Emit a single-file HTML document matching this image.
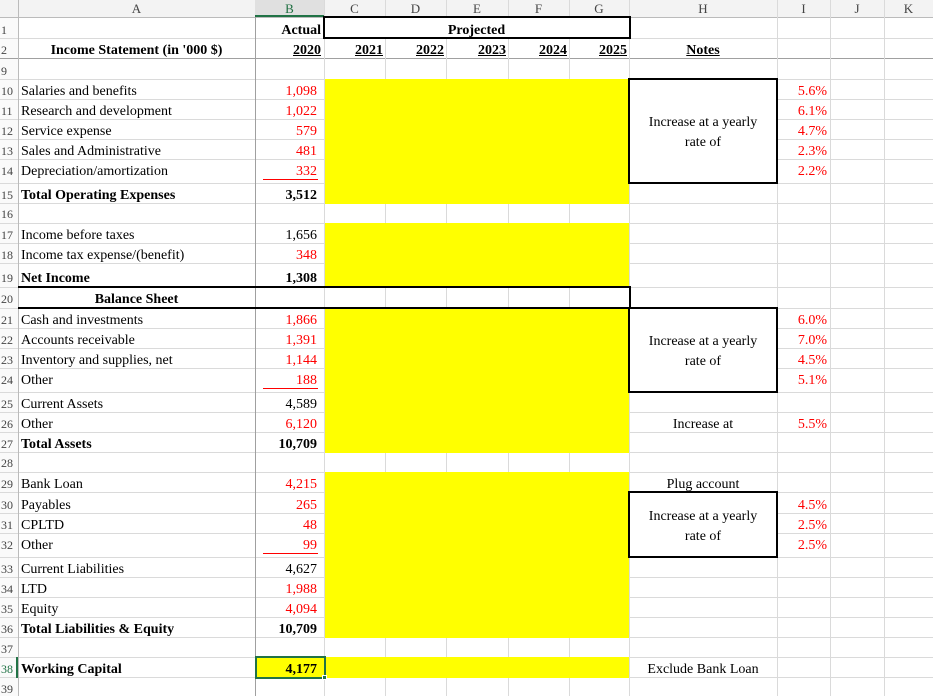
<!DOCTYPE html>
<html><head><meta charset="utf-8"><style>
body{margin:0;width:933px;height:696px;overflow:hidden;background:#fff;position:relative;font-family:"Liberation Serif",serif;font-size:14px;color:#000}
div{position:absolute;box-sizing:border-box}
.h{height:1px;left:0;width:933px;background:#dadada}
.v{width:1px;top:0;height:696px;background:#dadada}
.y{background:#ffff00}
.t{white-space:nowrap;height:17px;line-height:17px;margin-top:2px}
.r{text-align:right}
.c{text-align:center}
.b{font-weight:bold}
.red{color:#f00}
.u{text-decoration:underline}
.rn{left:0;width:18px;font-size:12px;color:#444;text-align:left;padding-left:1px;white-space:nowrap;font-family:"Liberation Serif",serif}
.cl{top:0;height:17px;line-height:17px;text-align:center;font-size:13px;color:#444}
.bx{border:2px solid #000;background:#fff}
.ul{height:1px;background:#f00;left:263px;width:55px}
</style></head><body>
<div style="left:0;top:0;width:933px;height:17px;background:#f3f3f3"></div>
<div style="left:0;top:17px;width:18px;height:679px;background:#fafafa"></div>
<div class="h" style="top:17px;background:#bbb"></div>
<div class="h" style="top:38px"></div><div class="h" style="top:58px;background:#a0a0a0"></div>
<div class="h" style="top:79px"></div><div class="h" style="top:99px"></div><div class="h" style="top:119px"></div>
<div class="h" style="top:139px"></div><div class="h" style="top:159px"></div><div class="h" style="top:183px"></div>
<div class="h" style="top:203px"></div><div class="h" style="top:223px"></div><div class="h" style="top:243px"></div>
<div class="h" style="top:263px"></div><div class="h" style="top:287px"></div><div class="h" style="top:308px"></div>
<div class="h" style="top:328px"></div><div class="h" style="top:348px"></div><div class="h" style="top:368px"></div>
<div class="h" style="top:392px"></div><div class="h" style="top:412px"></div><div class="h" style="top:432px"></div>
<div class="h" style="top:452px"></div><div class="h" style="top:472px"></div><div class="h" style="top:492px"></div>
<div class="h" style="top:513px"></div><div class="h" style="top:533px"></div><div class="h" style="top:557px"></div>
<div class="h" style="top:577px"></div><div class="h" style="top:597px"></div><div class="h" style="top:617px"></div>
<div class="h" style="top:637px"></div><div class="h" style="top:657px"></div><div class="h" style="top:677px"></div>
<div class="v" style="left:18px;background:#bbb"></div>
<div class="v" style="left:255px;background:#a0a0a0"></div>
<div class="v" style="left:324px"></div><div class="v" style="left:385px"></div><div class="v" style="left:446px"></div>
<div class="v" style="left:508px"></div><div class="v" style="left:569px"></div><div class="v" style="left:629px"></div>
<div class="v" style="left:777px"></div><div class="v" style="left:830px"></div><div class="v" style="left:884px"></div>
<div class="cl" style="left:18px;width:237px">A</div>
<div class="cl" style="left:255px;width:69px;background:#e0e0e0;color:#1e6e40">B</div>
<div style="left:255px;top:15px;width:69px;height:2px;background:#217346"></div>
<div class="cl" style="left:324px;width:61px">C</div>
<div class="cl" style="left:385px;width:61px">D</div>
<div class="cl" style="left:446px;width:62px">E</div>
<div class="cl" style="left:508px;width:61px">F</div>
<div class="cl" style="left:569px;width:60px">G</div>
<div class="cl" style="left:629px;width:148px">H</div>
<div class="cl" style="left:777px;width:53px">I</div>
<div class="cl" style="left:830px;width:54px">J</div>
<div class="cl" style="left:884px;width:49px">K</div>
<div class="y" style="left:325px;top:79px;width:304px;height:125px"></div>
<div class="y" style="left:325px;top:223px;width:304px;height:64px"></div>
<div class="y" style="left:325px;top:308px;width:304px;height:145px"></div>
<div class="y" style="left:325px;top:472px;width:304px;height:166px"></div>
<div class="y" style="left:325px;top:657px;width:304px;height:21px"></div>
<div class="y" style="left:256px;top:657px;width:68px;height:21px"></div>
<div style="left:255px;top:656px;width:71px;height:23px;border:2px solid #217346"></div>
<div style="left:322px;top:675px;width:5px;height:5px;background:#217346;border:1px solid #fff"></div>
<div class="bx" style="left:323px;top:16px;width:308px;height:23px"></div>
<div style="left:18px;top:286px;width:613px;height:23px;border:2px solid #000;border-left:none"></div>
<div class="bx" style="left:628px;top:78px;width:150px;height:106px"></div>
<div class="bx" style="left:628px;top:307px;width:150px;height:86px"></div>
<div class="bx" style="left:628px;top:491px;width:150px;height:67px"></div>
<div class="ul" style="top:179px"></div>
<div class="ul" style="top:388px"></div>
<div class="ul" style="top:553px"></div>
<div class="rn t" style="top:20px">1</div><div class="rn t" style="top:40px">2</div>
<div class="rn t" style="top:61px">9</div><div class="rn t" style="top:81px">10</div>
<div class="rn t" style="top:101px">11</div><div class="rn t" style="top:121px">12</div>
<div class="rn t" style="top:141px">13</div><div class="rn t" style="top:161px">14</div>
<div class="rn t" style="top:185px">15</div><div class="rn t" style="top:204px">16</div>
<div class="rn t" style="top:225px">17</div><div class="rn t" style="top:245px">18</div>
<div class="rn t" style="top:268px">19</div><div class="rn t" style="top:289px">20</div>
<div class="rn t" style="top:310px">21</div><div class="rn t" style="top:330px">22</div>
<div class="rn t" style="top:350px">23</div><div class="rn t" style="top:370px">24</div>
<div class="rn t" style="top:394px">25</div><div class="rn t" style="top:414px">26</div>
<div class="rn t" style="top:434px">27</div><div class="rn t" style="top:453px">28</div>
<div class="rn t" style="top:474px">29</div><div class="rn t" style="top:495px">30</div>
<div class="rn t" style="top:515px">31</div><div class="rn t" style="top:535px">32</div>
<div class="rn t" style="top:559px">33</div><div class="rn t" style="top:579px">34</div>
<div class="rn t" style="top:599px">35</div><div class="rn t" style="top:619px">36</div>
<div class="rn t" style="top:639px">37</div><div class="rn t" style="top:659px;color:#217346">38</div>
<div class="rn t" style="top:679px">39</div>
<div style="left:16px;top:657px;width:2px;height:21px;background:#217346"></div>
<div class="t b c" style="left:18px;width:237px;top:40px">Income Statement (in '000 $)</div>
<div class="t" style="left:21px;top:81px">Salaries and benefits</div>
<div class="t" style="left:21px;top:101px">Research and development</div>
<div class="t" style="left:21px;top:121px">Service expense</div>
<div class="t" style="left:21px;top:141px">Sales and Administrative</div>
<div class="t" style="left:21px;top:161px">Depreciation/amortization</div>
<div class="t b" style="left:21px;top:185px">Total Operating Expenses</div>
<div class="t" style="left:21px;top:225px">Income before taxes</div>
<div class="t" style="left:21px;top:245px">Income tax expense/(benefit)</div>
<div class="t b" style="left:21px;top:268px">Net Income</div>
<div class="t b c" style="left:18px;width:237px;top:289px">Balance Sheet</div>
<div class="t" style="left:21px;top:310px">Cash and investments</div>
<div class="t" style="left:21px;top:330px">Accounts receivable</div>
<div class="t" style="left:21px;top:350px">Inventory and supplies, net</div>
<div class="t" style="left:21px;top:370px">Other</div>
<div class="t" style="left:21px;top:394px">Current Assets</div>
<div class="t" style="left:21px;top:414px">Other</div>
<div class="t b" style="left:21px;top:434px">Total Assets</div>
<div class="t" style="left:21px;top:474px">Bank Loan</div>
<div class="t" style="left:21px;top:495px">Payables</div>
<div class="t" style="left:21px;top:515px">CPLTD</div>
<div class="t" style="left:21px;top:535px">Other</div>
<div class="t" style="left:21px;top:559px">Current Liabilities</div>
<div class="t" style="left:21px;top:579px">LTD</div>
<div class="t" style="left:21px;top:599px">Equity</div>
<div class="t b" style="left:21px;top:619px">Total Liabilities &amp; Equity</div>
<div class="t b" style="left:21px;top:659px">Working Capital</div>
<div class="t b r" style="left:255px;width:66px;top:20px">Actual</div>
<div class="t b r u" style="left:255px;width:66px;top:40px">2020</div>
<div class="t r red" style="left:255px;width:62px;top:81px">1,098</div>
<div class="t r red" style="left:255px;width:62px;top:101px">1,022</div>
<div class="t r red" style="left:255px;width:62px;top:121px">579</div>
<div class="t r red" style="left:255px;width:62px;top:141px">481</div>
<div class="t r red" style="left:255px;width:62px;top:161px">332</div>
<div class="t r b" style="left:255px;width:62px;top:185px">3,512</div>
<div class="t r" style="left:255px;width:62px;top:225px">1,656</div>
<div class="t r red" style="left:255px;width:62px;top:245px">348</div>
<div class="t r b" style="left:255px;width:62px;top:268px">1,308</div>
<div class="t r red" style="left:255px;width:62px;top:310px">1,866</div>
<div class="t r red" style="left:255px;width:62px;top:330px">1,391</div>
<div class="t r red" style="left:255px;width:62px;top:350px">1,144</div>
<div class="t r red" style="left:255px;width:62px;top:370px">188</div>
<div class="t r" style="left:255px;width:62px;top:394px">4,589</div>
<div class="t r red" style="left:255px;width:62px;top:414px">6,120</div>
<div class="t r b" style="left:255px;width:62px;top:434px">10,709</div>
<div class="t r red" style="left:255px;width:62px;top:474px">4,215</div>
<div class="t r red" style="left:255px;width:62px;top:495px">265</div>
<div class="t r red" style="left:255px;width:62px;top:515px">48</div>
<div class="t r red" style="left:255px;width:62px;top:535px">99</div>
<div class="t r" style="left:255px;width:62px;top:559px">4,627</div>
<div class="t r red" style="left:255px;width:62px;top:579px">1,988</div>
<div class="t r red" style="left:255px;width:62px;top:599px">4,094</div>
<div class="t r b" style="left:255px;width:62px;top:619px">10,709</div>
<div class="t r b" style="left:255px;width:62px;top:659px">4,177</div>
<div class="t b c" style="left:324px;width:305px;top:20px">Projected</div>
<div class="t b r u" style="left:324px;width:59px;top:40px">2021</div>
<div class="t b r u" style="left:385px;width:59px;top:40px">2022</div>
<div class="t b r u" style="left:446px;width:60px;top:40px">2023</div>
<div class="t b r u" style="left:508px;width:59px;top:40px">2024</div>
<div class="t b r u" style="left:569px;width:58px;top:40px">2025</div>
<div class="t b c u" style="left:629px;width:148px;top:40px">Notes</div>
<div class="t c" style="left:629px;width:148px;top:112px">Increase at a yearly</div>
<div class="t c" style="left:629px;width:148px;top:132px">rate of</div>
<div class="t c" style="left:629px;width:148px;top:331px">Increase at a yearly</div>
<div class="t c" style="left:629px;width:148px;top:351px">rate of</div>
<div class="t c" style="left:629px;width:148px;top:414px">Increase at</div>
<div class="t c" style="left:629px;width:148px;top:474px">Plug account</div>
<div class="t c" style="left:629px;width:148px;top:506px">Increase at a yearly</div>
<div class="t c" style="left:629px;width:148px;top:526px">rate of</div>
<div class="t c" style="left:629px;width:148px;top:659px">Exclude Bank Loan</div>
<div class="t r red" style="left:777px;width:50px;top:81px">5.6%</div>
<div class="t r red" style="left:777px;width:50px;top:101px">6.1%</div>
<div class="t r red" style="left:777px;width:50px;top:121px">4.7%</div>
<div class="t r red" style="left:777px;width:50px;top:141px">2.3%</div>
<div class="t r red" style="left:777px;width:50px;top:161px">2.2%</div>
<div class="t r red" style="left:777px;width:50px;top:310px">6.0%</div>
<div class="t r red" style="left:777px;width:50px;top:330px">7.0%</div>
<div class="t r red" style="left:777px;width:50px;top:350px">4.5%</div>
<div class="t r red" style="left:777px;width:50px;top:370px">5.1%</div>
<div class="t r red" style="left:777px;width:50px;top:414px">5.5%</div>
<div class="t r red" style="left:777px;width:50px;top:495px">4.5%</div>
<div class="t r red" style="left:777px;width:50px;top:515px">2.5%</div>
<div class="t r red" style="left:777px;width:50px;top:535px">2.5%</div>
</body></html>
